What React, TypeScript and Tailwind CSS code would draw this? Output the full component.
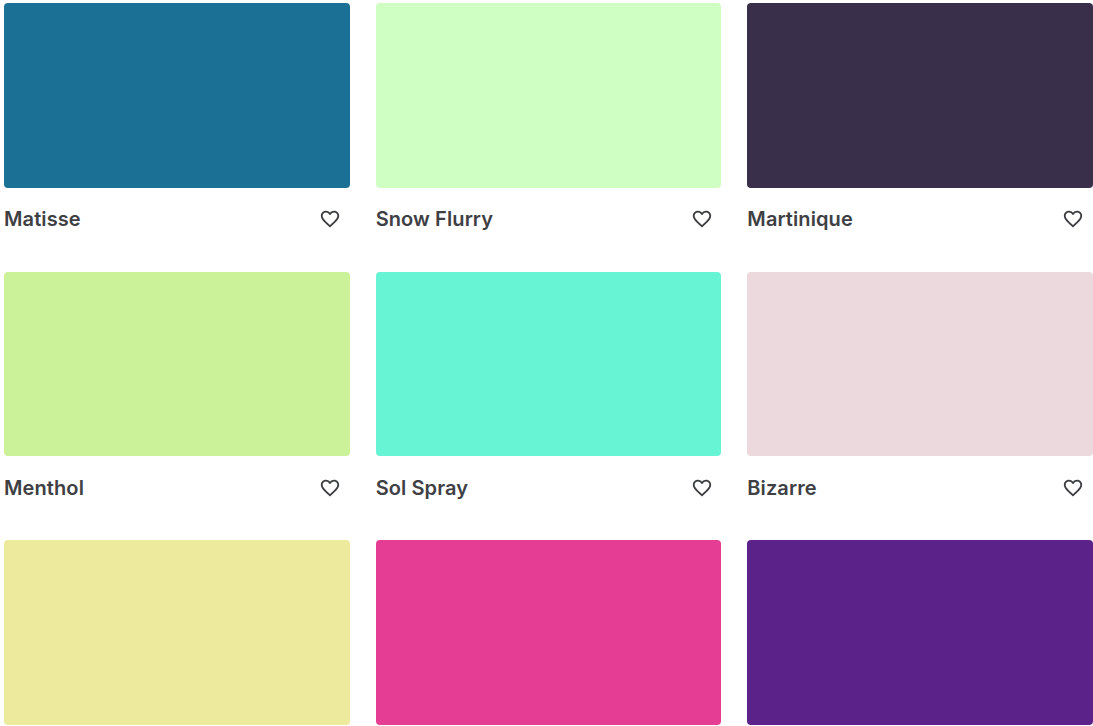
const colors = [
  { name: "Matisse", hex: "bg-[#1a7195]" },
  { name: "Snow Flurry", hex: "bg-[#cfffc2]" },
  { name: "Martinique", hex: "bg-[#3a2f4b]" },
  { name: "Menthol", hex: "bg-[#cbf299]" },
  { name: "Sol Spray", hex: "bg-[#66f4d5]" },
  { name: "Bizarre", hex: "bg-[#ecd9de]" },
  { hex: "bg-[#edea9d]" },
  { hex: "bg-[#e63d94]" },
  { hex: "bg-[#5b2389]" },
];

function HeartIcon() {
  return (
    <svg width="22" height="22" viewBox="0 0 24 24" fill="#3b3d40" aria-hidden="true">
      <path d="M16.5 3c-1.74 0-3.41.81-4.5 2.09C10.91 3.81 9.24 3 7.5 3 4.42 3 2 5.42 2 8.5c0 3.78 3.4 6.86 8.55 11.54L12 21.35l1.45-1.32C18.6 15.36 22 12.28 22 8.5 22 5.42 19.58 3 16.5 3zm-4.4 15.55l-.1.1-.1-.1C7.14 14.24 4 11.39 4 8.5 4 6.5 5.5 5 7.5 5c1.54 0 3.04.99 3.57 2.36h1.87C13.46 5.99 14.96 5 16.5 5c2 0 3.5 1.5 3.5 3.5 0 2.89-3.14 5.74-7.9 10.05z" />
    </svg>
  );
}

export default function App() {
  return (
    <div className="h-[726px] overflow-hidden bg-white pl-1 pt-[3px] font-['Inter',sans-serif]">
      <div className="grid grid-cols-3 gap-x-[26px]">
        {colors.map((color) => (
          <div key={color.hex} className="h-[268.67px]">
            <div className={`h-[184.67px] rounded ${color.hex}`} />
            {color.name && (
              <div className="flex h-[63px] items-center justify-between pr-[8.5px]">
                <span className="text-[20px] font-semibold tracking-[0.1px] text-[#3e4043]">{color.name}</span>
                <HeartIcon />
              </div>
            )}
          </div>
        ))}
      </div>
    </div>
  );
}
